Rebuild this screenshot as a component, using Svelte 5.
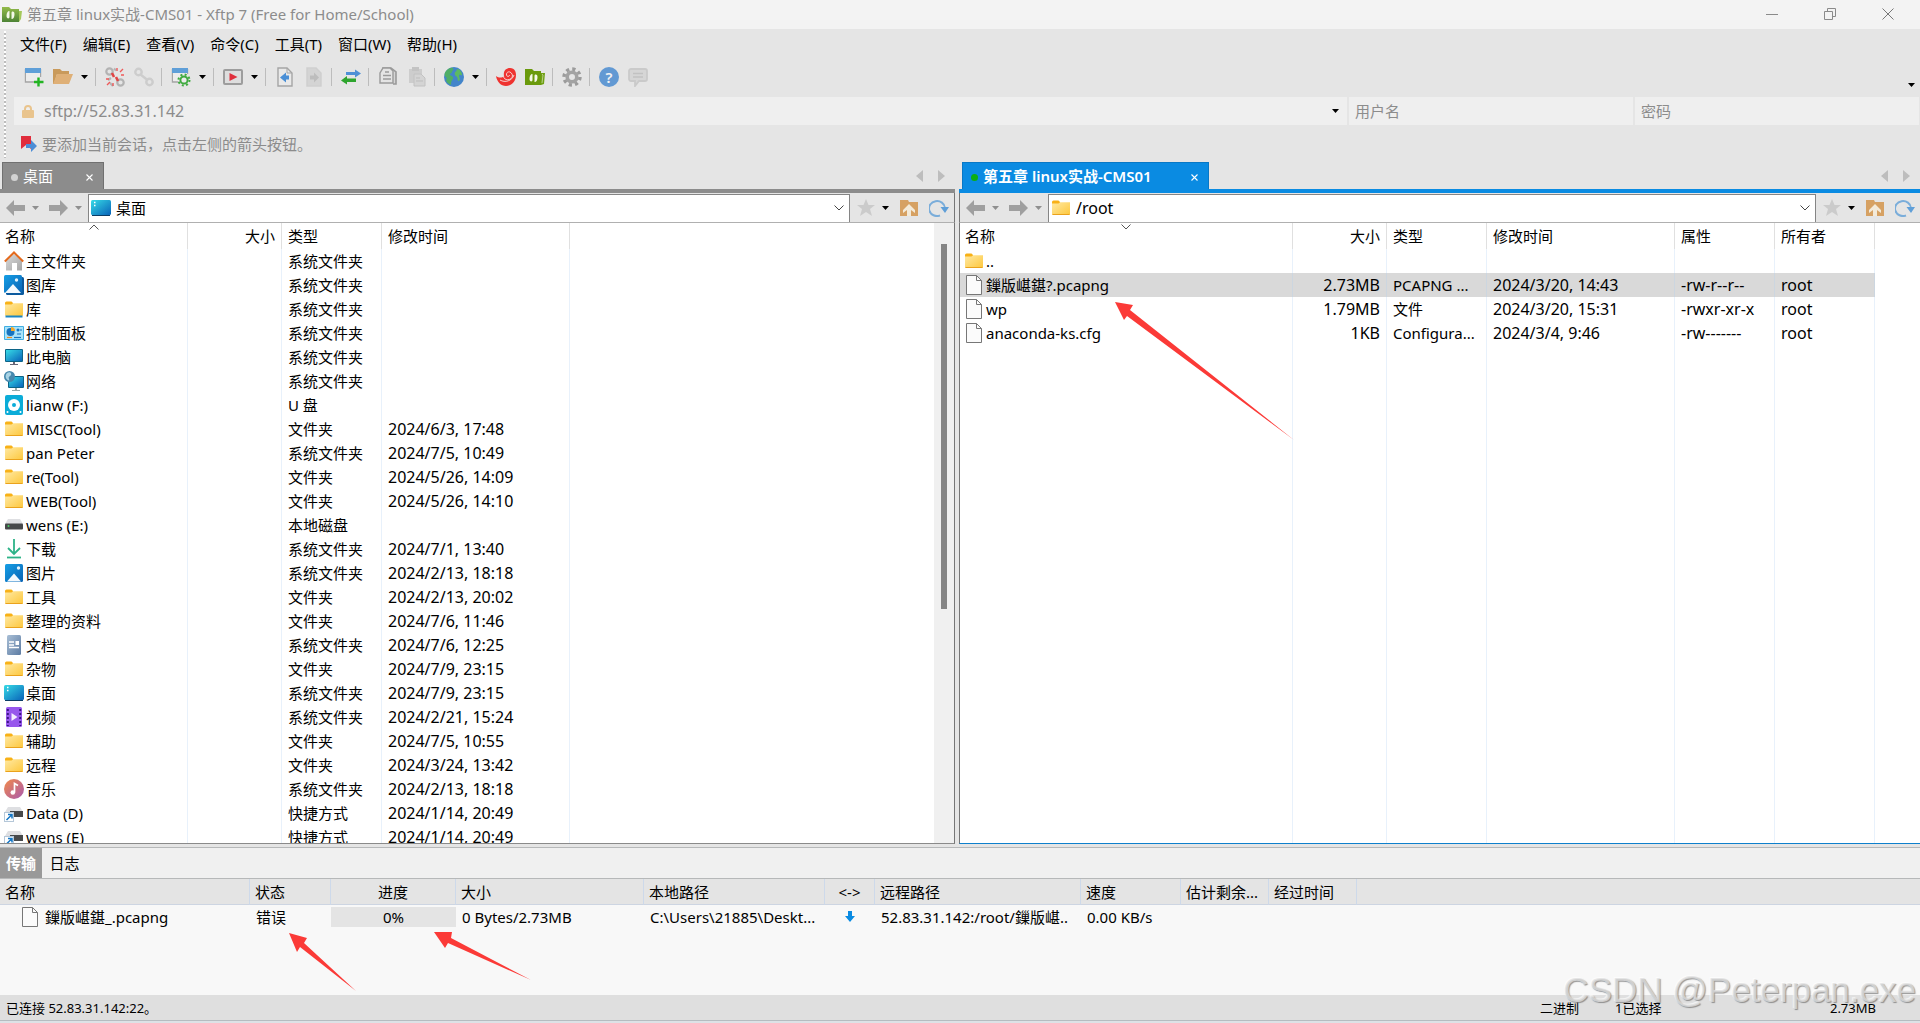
<script>
    const menus = ["文件(F)", "编辑(E)", "查看(V)", "命令(C)", "工具(T)", "窗口(W)", "帮助(H)"];

    const tools = [
        "new", "open", "caret", "sep",
        "unlink", "link", "sep",
        "props", "caret", "sep",
        "play", "caret", "sep",
        "pageLeft", "pageRight", "sep",
        "transfer", "sep",
        "copy", "paste", "sep",
        "globe", "caret", "sep",
        "swirl", "xftp", "sep",
        "gear", "sep",
        "help", "message",
    ];

    const sys = "系统文件夹";
    const dir = "文件夹";
    const localFiles = [
        { icon: "home", name: "主文件夹", type: sys, time: "" },
        { icon: "gallery", name: "图库", type: sys, time: "" },
        { icon: "library", name: "库", type: sys, time: "" },
        { icon: "control", name: "控制面板", type: sys, time: "" },
        { icon: "computer", name: "此电脑", type: sys, time: "" },
        { icon: "network", name: "网络", type: sys, time: "" },
        { icon: "usb", name: "lianw (F:)", type: "U 盘", time: "" },
        { icon: "folder", name: "MISC(Tool)", type: dir, time: "2024/6/3, 17:48" },
        { icon: "folder", name: "pan Peter", type: sys, time: "2024/7/5, 10:49" },
        { icon: "folder", name: "re(Tool)", type: dir, time: "2024/5/26, 14:09" },
        { icon: "folder", name: "WEB(Tool)", type: dir, time: "2024/5/26, 14:10" },
        { icon: "drive", name: "wens (E:)", type: "本地磁盘", time: "" },
        { icon: "download", name: "下载", type: sys, time: "2024/7/1, 13:40" },
        { icon: "picture", name: "图片", type: sys, time: "2024/2/13, 18:18" },
        { icon: "folder", name: "工具", type: dir, time: "2024/2/13, 20:02" },
        { icon: "folder", name: "整理的资料", type: dir, time: "2024/7/6, 11:46" },
        { icon: "document", name: "文档", type: sys, time: "2024/7/6, 12:25" },
        { icon: "folder", name: "杂物", type: dir, time: "2024/7/9, 23:15" },
        { icon: "desktop", name: "桌面", type: sys, time: "2024/7/9, 23:15" },
        { icon: "video", name: "视频", type: sys, time: "2024/2/21, 15:24" },
        { icon: "folder", name: "辅助", type: dir, time: "2024/7/5, 10:55" },
        { icon: "folder", name: "远程", type: dir, time: "2024/3/24, 13:42" },
        { icon: "music", name: "音乐", type: sys, time: "2024/2/13, 18:18" },
        { icon: "shortcut", name: "Data (D)", type: "快捷方式", time: "2024/1/14, 20:49" },
        { icon: "shortcut", name: "wens (E)", type: "快捷方式", time: "2024/1/14, 20:49" },
    ];

    const remoteFiles = [
        { icon: "folder", name: "..", size: "", type: "", time: "", mode: "", owner: "" },
        { icon: "file", name: "鏁版嵁鍖?.pcapng", size: "2.73MB", type: "PCAPNG ...", time: "2024/3/20, 14:43", mode: "-rw-r--r--", owner: "root" },
        { icon: "file", name: "wp", size: "1.79MB", type: "文件", time: "2024/3/20, 15:31", mode: "-rwxr-xr-x", owner: "root" },
        { icon: "file", name: "anaconda-ks.cfg", size: "1KB", type: "Configura...", time: "2024/3/4, 9:46", mode: "-rw-------", owner: "root" },
    ];

    let selected = $state(1);
    let address = $state("sftp://52.83.31.142");
    let localPath = $state("桌面");
    let remotePath = $state("/root");
</script>

{#snippet caret()}
    <svg width="7" height="4" viewBox="0 0 7 4"><path d="M0 0h7L3.500 4z" fill="currentColor" /></svg>
{/snippet}

{#snippet chevron()}
    <svg width="10" height="6" viewBox="0 0 10 6"><path d="M.5.5 5 5 9.500.5" fill="none" stroke="#444" /></svg>
{/snippet}

{#snippet closeIcon()}
    <svg width="7" height="7" viewBox="0 0 7 7"><path d="M.5.5l6 6M6.500.5l-6 6" stroke="#fff" stroke-width="1.1" /></svg>
{/snippet}

{#snippet toolIcon(kind)}
    <svg width="20" height="20" viewBox="0 0 20 20">
        {#if kind === "new"}
            <path d="M1.500 2v13h9M16.500 2v8" fill="none" stroke="#a5a5a5" stroke-width="1.400" />
            <path d="M2 6h14v8H2z" fill="#ececec" />
            <rect x="1" y="1" width="16" height="5" fill="#5f9fd8" />
            <path d="M14.500 10.500v9M10 15h9.500" stroke="#22b422" stroke-width="2.400" />
        {:else if kind === "open"}
            <path d="M0 2h7l2 2h7v3H4L1 17H0z" fill="#c99a5b" />
            <path d="M4 7h16l-4 10H0z" fill="#dfb077" />
        {:else if kind === "unlink"}
            <g fill="none" stroke="#b3b3b3" stroke-width="2.200">
                <circle cx="4.500" cy="4.500" r="3.200" /><path d="M9 1.500l2 2M3 13l3-2M5 16l3 3" /><circle cx="15.500" cy="15.500" r="3.200" />
            </g>
            <path d="M12 1v3M18 2l-3 3M19 8h-3M1 12h3M2 18l3-3M8 19v-3" stroke="#ee5a5a" stroke-width="1.400" />
            <path d="M7 6l2 4M11 10l2 4" stroke="#e14646" stroke-width="2.600" />
        {:else if kind === "link"}
            <g fill="none" stroke="#cdcdcd" stroke-width="2.400">
                <circle cx="4.500" cy="5" r="3.200" /><circle cx="15.500" cy="15" r="3.200" /><path d="M6.500 7.500l7 5.500" />
            </g>
        {:else if kind === "props"}
            <path d="M1.500 2v13h6M16.500 2v5" fill="none" stroke="#a5a5a5" stroke-width="1.400" />
            <path d="M2 6h14v8H2z" fill="#ececec" />
            <rect x="1" y="1" width="16" height="5" fill="#5f9fd8" />
            <circle cx="13" cy="13" r="3.600" fill="#ececec" stroke="#3faa3f" stroke-width="2" />
            <circle cx="13" cy="13" r="5.500" fill="none" stroke="#3faa3f" stroke-width="2" stroke-dasharray="2 2.320" />
        {:else if kind === "play"}
            <rect x="1" y="3" width="18" height="14" rx="1" fill="#dedede" stroke="#9d9d9d" stroke-width="2" />
            <path d="M6.500 6l8 4-8 4z" fill="#e02f3c" />
        {:else if kind === "pageLeft"}
            <path d="M3 1h9l5 5v13H3z" fill="#e9e9e9" stroke="#a5a5a5" stroke-width="1.400" />
            <path d="M12 1v5h5" fill="none" stroke="#a5a5a5" />
            <path d="M5 10.500l6-5v3h3v4h-3v3z" fill="#4a8fd6" />
        {:else if kind === "pageRight"}
            <path d="M3 1h9l5 5v13H3z" fill="#d4d4d4" stroke="#cfcfcf" stroke-width="1.400" />
            <path d="M15 10.500l-5-5v3H6v4h4v3z" fill="#bdbdbd" />
        {:else if kind === "transfer"}
            <path d="M5 5h9V2.500l6 4-6 4V8H5z" fill="#4f90d6" />
            <path d="M15 11.500H6V9l-6 4.500 6 4V15h9z" fill="#2ea52e" />
        {:else if kind === "copy"}
            <path d="M5 4V1h8l5 4v12h-3" fill="#d5d5d5" stroke="#9a9a9a" stroke-width="1.600" />
            <path d="M5 1h7l3 3v12H2V6z" fill="#e4e4e4" stroke="#9a9a9a" stroke-width="1.400" />
            <path d="M7 5h4M5 8.500h8M5 12h8" stroke="#9a9a9a" stroke-width="1.400" />
        {:else if kind === "paste"}
            <path d="M2 2h13v14H2z" fill="#cdcdcd" /><rect x="5" y="0" width="7" height="4" fill="#c3c3c3" />
            <path d="M7 7h7l4 4v8H7z" fill="#d4d4d4" stroke="#c2c2c2" />
            <path d="M9 11h4M9 14h7" stroke="#bdbdbd" />
        {:else if kind === "globe"}
            <circle cx="10" cy="10" r="10" fill="#4385ca" />
            <path d="M2 4c2-3 6-4 7-3 1 2-1 3-1 4S5 7 6 8c2 1 4 2 3 4-2 2-2 4-2 6C3 16 1 14 3 11 0 9 0 7 2 4z" fill="#4fae66" />
            <path d="M11 5c2 0 1-3 3-3 3 1 4 4 4 6-1 1-2-1-3 0 0 3 2 4 0 6-2 0-1-3-2-4s-3-2-2-5z" fill="#5cba62" />
        {:else if kind === "swirl"}
            <path d="M0 9c3 2 6 2 8 0-1-5 2-8 6-8 5 0 6 4 6 7 0 7-5 11-10 11C5 19 1 15 0 9z" fill="#ef3330" />
            <path d="M7.500 9c0 5 8 5 9 0 0-4-5-6-6-2-.5 3 3 3 3 1M4 13c5 3 12 1 14-5" fill="none" stroke="#f5d2d0" />
        {:else if kind === "xftp"}
            <path d="M0 2h7l2 2h7v14H0z" fill="#6a9a0c" /><path d="M16 6h4l-1 11-3 1z" fill="#6f9f14" /><path d="M17 7l1 1-1 8" fill="none" stroke="#cbdca3" stroke-width=".8" />
            <path d="M7.500 7v6c0 2-3 2-3-1s1-5 3-5zM9.500 15V9c0-2 3-2 3 1s-1 5-3 5z" fill="#f4f8e8" />
        {:else if kind === "gear"}
            <circle cx="10" cy="10" r="4.800" fill="none" stroke="#a3a3a3" stroke-width="3.600" />
            <circle cx="10" cy="10" r="8" fill="none" stroke="#9c9c9c" stroke-width="3.400" stroke-dasharray="3.200 3.083" />
        {:else if kind === "help"}
            <circle cx="10" cy="10" r="10" fill="#6299d3" />
            <text x="10" y="15.500" text-anchor="middle" font-size="15" font-weight="600" fill="#f2f2f2">?</text>
        {:else if kind === "message"}
            <path d="M3 2h14a2 2 0 0 1 2 2v8a2 2 0 0 1-2 2h-6l-4 5v-5H3a2 2 0 0 1-2-2V4a2 2 0 0 1 2-2z" fill="#d6d6d6" stroke="#cacaca" stroke-width="1.800" />
            <path d="M5 6.500h10M5 10h10" stroke="#c2c2c2" stroke-width="1.600" />
        {/if}
    </svg>
{/snippet}

{#snippet fileIcon(kind)}
    <svg width="20" height="20" viewBox="0 0 20 20">
        {#if kind === "folder" || kind === "library"}
            <path d="M1 4q0-1.500 1.500-1.500h5L9 4v3H1z" fill="#f8b117" />
            <path d="M1 5.500h6.500L9 4.200h10V16q0 1-1 1H2q-1 0-1-1z" fill="url(#folder)" />
            {#if kind === "folder"}
                <path d="M1.500 16.500h17" stroke="#eaa21c" />
            {:else}
                <path d="M1.500 17.500h17" stroke="#1c86c4" stroke-width="2" />
            {/if}
        {:else if kind === "home"}
            <path d="M2 9l8-6 8 6v10.500h-5V12H8v7.500H2z" fill="url(#wall)" />
            <path d="M.8 10.500L10 1.500l9.200 9" fill="none" stroke="#e46a1d" stroke-width="2" />
        {:else if kind === "gallery"}
            <rect x="2" y="2" width="18" height="18" rx="1.500" fill="#0b5a9e" />
            <rect width="18" height="18" rx="1.500" fill="url(#sky)" />
            <path d="M1 18l8-9 8 9z" fill="#f4f9fd" /><circle cx="12.500" cy="5" r="1.700" fill="#e3f3fc" />
        {:else if kind === "picture"}
            <rect x="1" y="1" width="18" height="18" rx="1.500" fill="url(#sky)" />
            <path d="M3 18.500l7-8 7 8z" fill="#f4f9fd" /><circle cx="14.500" cy="5" r="1.700" fill="#e3f3fc" />
        {:else if kind === "control"}
            <rect y="3" width="20" height="14" rx="1" fill="#40aee2" /><rect x="1" y="4" width="18" height="12" fill="#a8e3fa" />
            <circle cx="6.500" cy="9" r="4" fill="#1673bf" /><path d="M7 8V4a4 4 0 0 1 4 4z" fill="#f7a928" />
            <circle cx="14" cy="7" r="1.500" fill="#1673bf" /><path d="M13 11h4M16 7h2" stroke="#1673bf" />
            <path d="M3 14.500h5" stroke="#ee8e20" stroke-width="1.200" /><path d="M10 14.500h7" stroke="#1673bf" stroke-width="1.200" />
        {:else if kind === "computer"}
            <rect x="1" y="2" width="18" height="13" rx="1" fill="#0c6487" /><rect x="2" y="3" width="16" height="11" fill="url(#screen)" />
            <path d="M9 15h2v2h3v1H6v-1h3z" fill="#667" />
        {:else if kind === "network"}
            <rect x="4" y="5" width="16" height="12" rx="1" fill="#0c6487" /><rect x="5" y="6" width="14" height="10" fill="url(#screen)" />
            <path d="M11 17h2v2h3v1H8v-1h3z" fill="#9aa" />
            <circle cx="5.500" cy="5.500" r="5.500" fill="#4688ad" /><path d="M3 2c3-2 5 0 4 2S4 5 5 8s-2 1-3-1 0-4 1-5z" fill="#a9d3e5" />
        {:else if kind === "usb"}
            <rect x="1" y="0" width="18" height="20" rx="2" fill="#0bacd8" /><circle cx="10" cy="10" r="6" fill="#fff" />
            <circle cx="10" cy="10" r="2" fill="#0bacd8" /><circle cx="3.500" cy="17" r="1" fill="#fff" /><circle cx="16.500" cy="17" r="1" fill="#fff" />
        {:else if kind === "drive"}
            <path d="M4 4h12l3 5H1z" fill="#dedfe2" /><rect x="1" y="8.500" width="18" height="6" rx="1" fill="#46484a" />
            <circle cx="4.500" cy="11" r="1" fill="#45cf62" />
        {:else if kind === "download"}
            <path d="M10 0v14M4 9l6 6 6-6" fill="none" stroke="#2db388" stroke-width="1.800" /><path d="M3 18.500h14" stroke="#2db388" stroke-width="1.800" />
        {:else if kind === "document"}
            <rect x="3" y="0" width="14" height="20" rx="1.500" fill="url(#doc)" />
            <path d="M5 7h5M5 10h5M5 12.500h10" stroke="#fff" stroke-width="1.300" /><rect x="11.500" y="6" width="3.500" height="4" fill="#fff" />
        {:else if kind === "desktop"}
            <rect y="2" width="20" height="15" rx="1.500" fill="url(#screen)" /><path d="M1 17.500h18" stroke="#0b3d66" />
            <path d="M3 4.500h1.500M3 7.500h1.500" stroke="#fff" stroke-width="1.600" />
        {:else if kind === "video"}
            <rect x="2" width="16" height="20" rx="1.500" fill="#9757ec" />
            <path d="M3.800 2v17M16.200 2v17" stroke="#3c1585" stroke-width="2" stroke-dasharray="2 2" /><path d="M7.500 6l6 4-6 4z" fill="#f4ecff" />
        {:else if kind === "music"}
            <circle cx="10" cy="10" r="10" fill="url(#music)" />
            <path d="M10.500 13.500V4.500l3.500 2" fill="none" stroke="#fff" stroke-width="1.700" /><circle cx="8.800" cy="13.500" r="2.300" fill="#fff" />
        {:else if kind === "shortcut"}
            <path d="M4 4h12l3 5H1z" fill="#dedfe2" /><rect x="6" y="8" width="13" height="6" fill="#46484a" />
            <rect x=".5" y="9.500" width="9" height="9" fill="#fff" stroke="#b5c7d8" /><path d="M2.500 17L7.500 12M4 11.500h4v4" fill="none" stroke="#1477c6" stroke-width="1.500" />
        {:else if kind === "file"}
            <path d="M2.500.5h10l5 5v14h-15z" fill="#fbfbfb" stroke="#777" /><path d="M12.500.5v5h5" fill="none" stroke="#777" />
        {/if}
    </svg>
{/snippet}

{#snippet navButtons()}
    <button class="nav" aria-label="后退"><svg width="19" height="16" viewBox="0 0 19 16"><path d="M0 8l8-8v5h11v6H8v5z" fill="#9f9f9f" /></svg></button>
    <button class="nav-caret" aria-label="后退历史">{@render caret()}</button>
    <button class="nav" aria-label="前进"><svg width="19" height="16" viewBox="0 0 19 16"><path d="M19 8l-8-8v5H0v6h11v5z" fill="#9f9f9f" /></svg></button>
    <button class="nav-caret" aria-label="前进历史">{@render caret()}</button>
{/snippet}

{#snippet pathButtons()}
    <div class="path-buttons">
        <button aria-label="书签"><svg width="18" height="17" viewBox="0 0 18 17"><path d="M9 0l2.500 6H18l-5 4 2 7-6-4-6 4 2-7-5-4h6.500z" fill="#cbcbcb" /></svg></button>
        <button class="dark" aria-label="书签列表">{@render caret()}</button>
        <button aria-label="上一级"><svg width="18" height="16" viewBox="0 0 18 16"><path d="M0 0h8l1 2h9v14H0z" fill="#d6a163" /><path d="M9 4l6 6v3l-4-3v6H7v-6l-4 3v-3z" fill="#f3ead9" /></svg></button>
        <button aria-label="刷新"><svg width="20" height="18" viewBox="0 0 20 18"><path d="M11 16.500A8 7.500 0 1 1 16 9" fill="none" stroke="#7aadda" stroke-width="2" /><path d="M11.500 8H20l-4 6z" fill="#5f9fd8" /></svg></button>
    </div>
{/snippet}

{#snippet tabScroll()}
    <div class="tab-scroll">
        <button aria-label="向左"><svg width="7" height="12" viewBox="0 0 7 12"><path d="M7 0v12L0 6z" fill="#bdbdbd" /></svg></button>
        <button aria-label="向右"><svg width="7" height="12" viewBox="0 0 7 12"><path d="M0 0v12l7-6z" fill="#bdbdbd" /></svg></button>
    </div>
{/snippet}

<div class="window">
    <header class="titlebar">
        <svg width="20" height="18" viewBox="0 0 20 18">
            <defs>
                <linearGradient id="folder" x1="0" y1="0" x2="1" y2="1"><stop offset="0" stop-color="#ffe9a3" /><stop offset="1" stop-color="#fdc73c" /></linearGradient>
                <linearGradient id="screen" x1="0" y1="0" x2="1" y2="1"><stop offset="0" stop-color="#36dbe6" /><stop offset="1" stop-color="#0963b9" /></linearGradient>
                <linearGradient id="sky" x1="0" y1="0" x2="1" y2="1"><stop offset="0" stop-color="#159fe6" /><stop offset="1" stop-color="#0a63b4" /></linearGradient>
                <linearGradient id="wall" x1="0" y1="0" x2="1" y2="1"><stop offset="0" stop-color="#dadada" /><stop offset="1" stop-color="#a4a4a4" /></linearGradient>
                <linearGradient id="doc" x1="0" y1="0" x2="1" y2="1"><stop offset="0" stop-color="#a9bfd6" /><stop offset="1" stop-color="#5c7ba2" /></linearGradient>
                <linearGradient id="music" x1="0" y1="0" x2="1" y2="1"><stop offset="0" stop-color="#f28a48" /><stop offset="1" stop-color="#a95ab0" /></linearGradient>
                <linearGradient id="logo" x1="0" y1="0" x2="0" y2="1"><stop offset="0" stop-color="#93bb4a" /><stop offset="1" stop-color="#4d8436" /></linearGradient>
            </defs>
            <path d="M0 2h7l2 2h8v13H0z" fill="url(#logo)" /><path d="M17 6h3l-1 8-2 3z" fill="#a5c95c" />
            <path d="M7.500 6v6c0 2-3 2-3-1s1-5 3-5zM9.500 14V8c0-2 3-2 3 1s-1 5-3 5z" fill="#f4f8e8" />
        </svg>
        <span class="title">第五章 linux实战-CMS01 - Xftp 7 (Free for Home/School)</span>
        <div class="window-buttons">
            <button aria-label="最小化"><svg width="12" height="12" viewBox="0 0 12 12"><path d="M0 6.500h12" stroke="#8a8a8a" /></svg></button>
            <button aria-label="还原"><svg width="12" height="12" viewBox="0 0 12 12"><path d="M.5 3.500h8v8h-8zM3.500 3V.5h8v8H9" fill="none" stroke="#8a8a8a" /></svg></button>
            <button aria-label="关闭"><svg width="12" height="12" viewBox="0 0 12 12"><path d="M.5.5l11 11M11.500.5l-11 11" stroke="#777" /></svg></button>
        </div>
    </header>

    <div class="bars">
        <nav class="menubar">
            {#each menus as menu}
                <button>{menu}</button>
            {/each}
        </nav>

        <div class="toolbar">
            {#each tools as tool}
                {#if tool === "sep"}
                    <span class="sep"></span>
                {:else if tool === "caret"}
                    <button class="tool-caret" aria-label="更多">{@render caret()}</button>
                {:else}
                    <button class="tool" aria-label={tool}>{@render toolIcon(tool)}</button>
                {/if}
            {/each}
            <button class="overflow" aria-label="工具栏选项">{@render caret()}</button>
        </div>

        <div class="address">
            <div class="field url">
                <svg width="12" height="13" viewBox="0 0 12 13"><path d="M3 6V4a3 3 0 0 1 6 0v2" fill="none" stroke="#e9c48d" stroke-width="2" /><rect y="5" width="12" height="8" rx="1" fill="#e9c48d" /></svg>
                <input class="num" aria-label="地址" bind:value={address} />
                <button class="dark" aria-label="历史地址">{@render caret()}</button>
            </div>
            <div class="field user"><input aria-label="用户名" placeholder="用户名" /></div>
            <div class="field pass"><input aria-label="密码" type="password" placeholder="密码" /></div>
        </div>

        <div class="hint">
            <svg width="16" height="16" viewBox="0 0 16 16"><path d="M0 0h10v13l-5-4-5 4z" fill="#e02d3c" /><path d="M5 8h5V4l6 6-6 6v-4H5z" fill="#4c8dd6" /></svg>
            <span>要添加当前会话，点击左侧的箭头按钮。</span>
        </div>
    </div>

    <main class="panes">
        <section class="pane local">
            <div class="tabs">
                <div class="tab">
                    <span class="dot"></span>
                    <span>桌面</span>
                    <button aria-label="关闭标签">{@render closeIcon()}</button>
                </div>
                {@render tabScroll()}
            </div>
            <div class="path">
                {@render navButtons()}
                <div class="path-box">
                    {@render fileIcon("desktop")}
                    <input aria-label="本地路径" bind:value={localPath} />
                    <button aria-label="展开">{@render chevron()}</button>
                </div>
                {@render pathButtons()}
            </div>
            <div class="list">
                <table>
                    <colgroup><col class="w188" /><col class="w94" /><col class="w100" /><col class="w188" /><col /></colgroup>
                    <thead>
                        <tr>
                            <th>名称<svg class="sort" width="10" height="6" viewBox="0 0 10 6"><path d="M.5 5.500L5 1l4.500 4.500" fill="none" stroke="#555" /></svg></th>
                            <th class="right">大小</th>
                            <th>类型</th>
                            <th>修改时间</th>
                            <th></th>
                        </tr>
                    </thead>
                    <tbody>
                        {#each localFiles as file}
                            <tr>
                                <td class="name"><div>{@render fileIcon(file.icon)}<span>{file.name}</span></div></td>
                                <td></td>
                                <td>{file.type}</td>
                                <td class="num">{file.time}</td>
                                <td></td>
                            </tr>
                        {/each}
                    </tbody>
                </table>
                <div class="scroll"><div class="thumb"></div></div>
            </div>
        </section>

        <section class="pane remote">
            <div class="tabs">
                <div class="tab">
                    <span class="dot"></span>
                    <span>第五章 linux实战-CMS01</span>
                    <button aria-label="关闭标签">{@render closeIcon()}</button>
                </div>
                {@render tabScroll()}
            </div>
            <div class="path">
                {@render navButtons()}
                <div class="path-box">
                    {@render fileIcon("folder")}
                    <input class="num" aria-label="远程路径" bind:value={remotePath} />
                    <button aria-label="展开">{@render chevron()}</button>
                </div>
                {@render pathButtons()}
            </div>
            <div class="list">
                <table>
                    <colgroup><col class="w333" /><col class="w94" /><col class="w100" /><col class="w188" /><col class="w100" /><col class="w100" /><col /></colgroup>
                    <thead>
                        <tr>
                            <th>名称<svg class="sort" width="10" height="6" viewBox="0 0 10 6"><path d="M.5.500L5 5 9.500.5" fill="none" stroke="#555" /></svg></th>
                            <th class="right">大小</th>
                            <th>类型</th>
                            <th>修改时间</th>
                            <th>属性</th>
                            <th>所有者</th>
                            <th></th>
                        </tr>
                    </thead>
                    <tbody>
                        {#each remoteFiles as file, i}
                            <tr class:selected={selected === i} onclick={() => (selected = i)}>
                                <td class="name"><div>{@render fileIcon(file.icon)}<span>{file.name}</span></div></td>
                                <td class="num right">{file.size}</td>
                                <td>{file.type}</td>
                                <td class="num">{file.time}</td>
                                <td class="num">{file.mode}</td>
                                <td class="num">{file.owner}</td>
                                <td></td>
                            </tr>
                        {/each}
                        <tr class="filler"><td></td><td></td><td></td><td></td><td></td><td></td><td></td></tr>
                    </tbody>
                </table>
            </div>
            <svg class="arrow to-file" width="182" height="140" viewBox="0 0 182 140"><path d="M0 0l18 3-3 5 164 130L12 14l-3 4z" fill="#fb3a37" /></svg>
        </section>
    </main>

    <section class="transfers">
        <div class="transfer-tabs">
            <button class="active">传输</button>
            <button>日志</button>
        </div>
        <table>
            <colgroup>
                <col class="w250" /><col class="w81" /><col class="w125" /><col class="w188" /><col class="w181" /><col class="w50" />
                <col class="w206" /><col class="w100" /><col class="w88" /><col class="w88" /><col />
            </colgroup>
            <thead>
                <tr>
                    <th>名称</th>
                    <th>状态</th>
                    <th class="center">进度</th>
                    <th>大小</th>
                    <th>本地路径</th>
                    <th class="center">{"<->"}</th>
                    <th>远程路径</th>
                    <th>速度</th>
                    <th>估计剩余...</th>
                    <th>经过时间</th>
                    <th></th>
                </tr>
            </thead>
            <tbody>
                <tr>
                    <td class="job"><div>{@render fileIcon("file")}<span>鏁版嵁鍖_.pcapng</span></div></td>
                    <td>错误</td>
                    <td class="progress"><div>0%</div></td>
                    <td>0 Bytes/2.73MB</td>
                    <td>C:\Users\21885\Deskt...</td>
                    <td class="center"><svg width="10" height="11" viewBox="0 0 10 11"><path d="M3 0h4v5h3l-5 6-5-6h3z" fill="#0a8be2" /></svg></td>
                    <td>52.83.31.142:/root/鏁版嵁..</td>
                    <td>0.00 KB/s</td>
                    <td></td>
                    <td></td>
                    <td></td>
                </tr>
            </tbody>
        </table>
        <svg class="arrow to-state" width="68" height="60" viewBox="0 0 68 60"><path d="M0 0l18 5-3 5 52 48L11 14l-3 5z" fill="#fb3a37" /></svg>
        <svg class="arrow to-progress" width="98" height="50" viewBox="0 0 98 50"><path d="M0 0h18l-1 6 80 42L14 11l-3 5z" fill="#fb3a37" /></svg>
    </section>

    <footer class="status">
        <span>已连接 52.83.31.142:22。</span>
        <div class="status-right">
            <span>二进制</span>
            <span>1已选择</span>
            <span>2.73MB</span>
        </div>
    </footer>
    <div class="watermark">CSDN @Peterpan.exe</div>
</div>

<style>
    :global(body) {
        margin: 0;
    }

    .window {
        position: relative;
        display: flex;
        flex-direction: column;
        height: 100vh;
        box-sizing: border-box;
        overflow: hidden;
        border-bottom: 2px solid #dde2e6;
        background: #e5e5e5;
        color: #000;
        font-family: "Noto Sans", "Noto Sans CJK SC", sans-serif;
        font-size: 15px;
        line-height: 20px;
    }

    svg {
        flex: none;
        display: block;
    }

    button {
        display: flex;
        align-items: center;
        justify-content: center;
        padding: 0;
        border: 0;
        background: none;
        color: inherit;
        font: inherit;
    }

    input {
        flex: 1;
        min-width: 0;
        padding: 0;
        border: 0;
        outline: 0;
        background: none;
        color: inherit;
        font: inherit;
    }

    input::placeholder {
        color: #8c8c8c;
        opacity: 1;
    }

    .titlebar {
        display: flex;
        align-items: center;
        gap: 5px;
        height: 29px;
        padding: 0 0 2px 2px;
        box-sizing: border-box;
        background: #f3f3f3;
        color: #8c8c8c;
    }

    .window-buttons {
        display: flex;
        margin-left: auto;
        padding-right: 3px;
    }

    .window-buttons button {
        width: 58px;
    }

    .bars {
        position: relative;
    }

    .bars::before {
        content: "";
        position: absolute;
        left: 4px;
        top: 2px;
        bottom: 4px;
        width: 2px;
        background: repeating-linear-gradient(#fff 0 2px, #bdbdbd 2px 4px);
    }

    .menubar {
        display: flex;
        gap: 16px;
        height: 31px;
        padding: 0 0 2px 20px;
        box-sizing: border-box;
    }

    .toolbar {
        display: flex;
        align-items: center;
        height: 34px;
        padding-left: 19px;
    }

    .tool {
        width: 29px;
    }

    .tool-caret {
        width: 15px;
    }

    .dark {
        color: #000;
    }

    .sep {
        width: 1px;
        height: 18px;
        margin: 0 4px 0 3px;
        background: #bcbcbc;
    }

    .overflow {
        align-self: flex-end;
        margin: 0 5px 7px auto;
    }

    .address {
        display: flex;
        gap: 2px;
        padding: 3px 1px 0 14px;
        color: #8c8c8c;
    }

    .field {
        display: flex;
        align-items: center;
        gap: 10px;
        height: 28px;
        padding: 0 8px;
        box-sizing: border-box;
        background: #efefef;
    }

    .url {
        flex: 1;
    }

    .user,
    .pass {
        width: 284px;
        padding: 0 6px;
    }

    .hint {
        display: flex;
        align-items: center;
        gap: 5px;
        height: 37px;
        padding-left: 21px;
        color: #8c8c8c;
    }

    .panes {
        flex: 1;
        display: grid;
        grid-template-columns: 955fr 961fr;
        gap: 4px;
        min-height: 0;
    }

    .pane {
        position: relative;
        display: flex;
        flex-direction: column;
        min-width: 0;
        min-height: 0;
    }

    .tabs {
        display: flex;
        align-items: flex-end;
        justify-content: space-between;
        height: 27px;
        padding-left: 2px;
        border-bottom: 4px solid #8c8c8c;
    }

    .remote .tabs {
        padding-left: 3px;
        border-color: #0a8be2;
    }

    .tab {
        display: flex;
        align-items: center;
        gap: 5px;
        height: 27px;
        padding: 0 10px 0 8px;
        box-sizing: border-box;
        border: 1px solid #707070;
        border-bottom: 0;
        background: #8c8c8c;
        color: #fff;
    }

    .tab button {
        margin-left: 28px;
        padding-top: 3px;
    }

    .remote .tab {
        border-color: #0878c6;
        background: #0a8be2;
        font-weight: 600;
    }

    .remote .tab button {
        margin-left: 34px;
    }

    .dot {
        width: 7px;
        height: 7px;
        margin-top: 2px;
        border-radius: 4px;
        background: #d2d2d2;
    }

    .remote .dot {
        background: #0cae12;
    }

    .tab-scroll {
        display: flex;
        gap: 15px;
        padding: 0 10px 7px 0;
    }

    .path {
        display: flex;
        align-items: center;
        height: 29px;
        border-bottom: 1px solid #b0b0b0;
        border-right: 1px solid #767676;
        color: #8f8f8f;
    }

    .local .path {
        padding-left: 5px;
    }

    .remote .path {
        padding-left: 5px;
        border-left: 1px solid #767676;
        border-right: 0;
    }

    .nav {
        width: 20px;
    }

    .nav-caret {
        width: 20px;
        margin-right: 3px;
    }

    .nav-caret:nth-child(4) {
        margin-right: 0;
    }

    .path-box {
        flex: 1;
        display: flex;
        align-items: center;
        gap: 5px;
        height: 28px;
        padding: 0 5px 2px 2px;
        box-sizing: border-box;
        align-self: flex-end;
        border: 1px solid #858585;
        border-bottom: 0;
        background: #fff;
        color: #000;
    }

    .path-buttons {
        display: flex;
        align-items: center;
        gap: 11px;
        padding: 0 5px 0 7px;
    }

    .path-buttons .dark {
        margin-left: -4px;
    }

    .list {
        flex: 1;
        display: flex;
        min-height: 0;
        overflow: hidden;
        border-right: 1px solid #767676;
        border-bottom: 1px solid #8a8a8a;
        background: #fff;
    }

    .remote .list {
        border-right: 0;
        border-left: 1px solid #767676;
        border-bottom-color: #0e80cc;
    }

    table {
        width: 100%;
        border-collapse: separate;
        border-spacing: 0;
        table-layout: fixed;
    }

    .remote table {
        height: 100%;
    }

    th,
    td {
        position: relative;
        height: 24px;
        padding: 0 6px;
        box-sizing: border-box;
        border-right: 1px solid #e8f1fb;
        font-weight: 400;
        text-align: left;
        white-space: nowrap;
        overflow: hidden;
    }

    .list th {
        height: 26px;
        border-color: #e0e0e0;
    }

    th:first-child {
        padding-left: 5px;
    }

    th:last-child,
    td:last-child {
        border-right: 0;
    }

    .right {
        text-align: right;
    }

    .center {
        text-align: center;
    }

    .num {
        font-size: 16px;
    }

    .name {
        padding-left: 4px;
    }

    .name div {
        display: flex;
        align-items: center;
        gap: 2px;
    }

    .sort {
        position: absolute;
        top: 1px;
        left: 50%;
        transform: translateX(-50%);
    }

    .selected td:not(:last-child) {
        background: #d9d9d9;
        border-color: #ccd6e0;
    }

    .filler td {
        height: auto;
    }

    .scroll {
        width: 20px;
        flex: none;
        display: flex;
        justify-content: center;
        padding-top: 21px;
        box-sizing: border-box;
        background: #f0f0f0;
    }

    .thumb {
        width: 6px;
        height: 61%;
        background: #858585;
    }

    .transfers {
        position: relative;
        height: 147px;
        margin-top: 3px;
        border-top: 1px solid #b6b8b9;
        background: #f8f8f8;
    }

    .transfer-tabs {
        display: flex;
        height: 30px;
        border-bottom: 1px solid #b6b8b9;
        background: #f0f0f0;
    }

    .transfer-tabs button {
        width: 42px;
    }

    .transfer-tabs button:last-child {
        width: 45px;
    }

    .transfer-tabs .active {
        background: #999;
        color: #fff;
        font-weight: 600;
    }

    .transfers th {
        height: 26px;
        padding: 0 5px;
        background: #e4e4e4;
        border-right-color: #cdd9ea;
        border-bottom: 1px solid #cdd5e2;
    }

    .transfers td {
        border: 0;
    }

    .transfers .job {
        padding-left: 20px;
    }

    .job div {
        display: flex;
        align-items: center;
        gap: 5px;
    }

    .transfers .progress {
        padding: 0;
    }

    .progress div {
        background: #e4e4e4;
        text-align: center;
    }

    .center svg {
        margin: 0 auto 2px;
    }

    .status {
        display: flex;
        align-items: center;
        justify-content: space-between;
        height: 26px;
        padding: 0 44px 0 6px;
        box-sizing: border-box;
        border-bottom: 1px solid #b6bcc0;
        background: #dfdfdf;
        font-size: 13px;
    }

    .status-right {
        display: grid;
        grid-template-columns: 75px 215px auto;
    }

    .arrow {
        position: absolute;
    }

    .to-file {
        left: 156px;
        top: 140px;
    }

    .to-state {
        left: 289px;
        top: 85px;
    }

    .to-progress {
        left: 434px;
        top: 84px;
    }

    .watermark {
        position: absolute;
        right: 4px;
        bottom: 10px;
        color: rgba(225, 225, 225, 0.75);
        font-family: "Liberation Sans", sans-serif;
        font-size: 35px;
        line-height: 42px;
        text-shadow: 1px 1px 1px rgba(110, 110, 110, 0.7), -1px -1px 0 rgba(255, 255, 255, 0.6);
        pointer-events: none;
    }

    .w50 {
        width: 50px;
    }

    .w81 {
        width: 81px;
    }

    .w88 {
        width: 88px;
    }

    .w94 {
        width: 94px;
    }

    .w100 {
        width: 100px;
    }

    .w125 {
        width: 125px;
    }

    .w181 {
        width: 181px;
    }

    .w188 {
        width: 188px;
    }

    .w206 {
        width: 206px;
    }

    .w250 {
        width: 250px;
    }

    .w333 {
        width: 333px;
    }
</style>
